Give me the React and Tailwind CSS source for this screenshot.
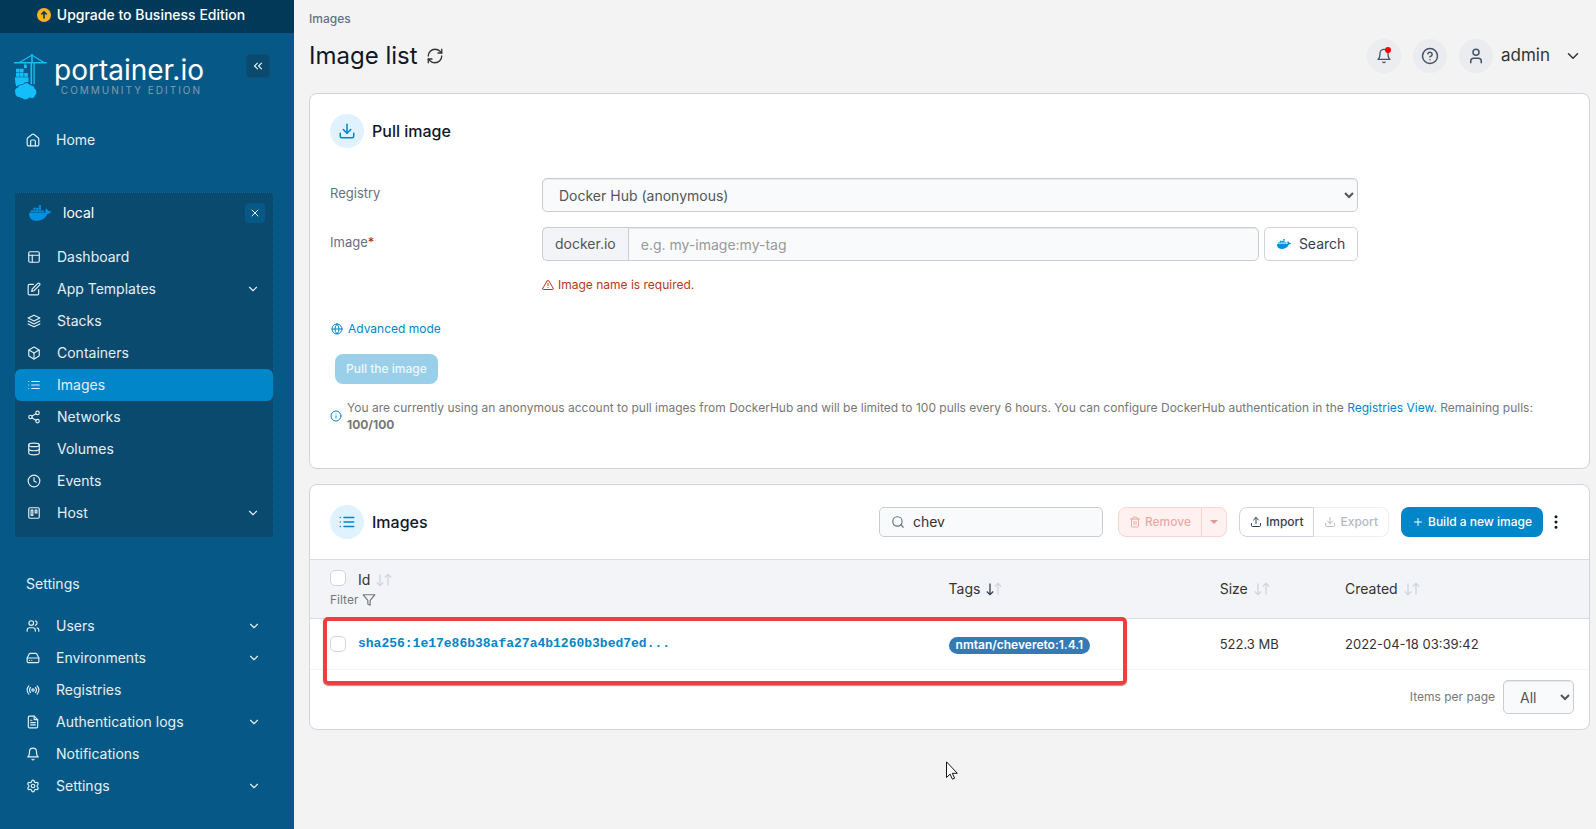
import React, { useState } from "react";
import {
  FiLayout,
  FiEdit,
  FiLayers,
  FiBox,
  FiList,
  FiShare2,
  FiDatabase,
  FiClock,
  FiTrello,
  FiHardDrive,
  FiRadio,
  FiFileText,
  FiBell,
  FiChevronDown,
  FiChevronsLeft,
  FiX,
  FiHelpCircle,
  FiDownload,
  FiUpload,
  FiTrash2,
  FiSearch,
  FiPlus,
  FiMoreVertical,
  FiFilter,
  FiInfo,
  FiGlobe,
  FiAlertTriangle,
} from "react-icons/fi";
import { FaDocker } from "react-icons/fa";
import { RefreshCw, Settings, User, Users } from "lucide-react";

const HomeIcon = ({ className }) => (
  <svg
    viewBox="0 0 24 24"
    fill="none"
    stroke="currentColor"
    strokeWidth="2"
    strokeLinecap="round"
    strokeLinejoin="round"
    className={className}
  >
    <path d="M2 10.600c0-1 .5-2 1.300-2.600l6.800-5.300a3 3 0 0 1 3.800 0L20.700 8c.8.6 1.300 1.600 1.300 2.600V20a2 2 0 0 1-2 2H4a2 2 0 0 1-2-2z" />
    <path d="M8 22v-8a2 2 0 0 1 2-2h4a2 2 0 0 1 2 2v8" />
  </svg>
);

const CraneLogo = () => (
  <svg viewBox="0 0 100 140" className="w-[33px] h-[46px] shrink-0" fill="#13bef9">
    <path d="M52 0h5v26h-5z" />
    <path d="M0 24h99v5H0z" />
    <path d="M54 4 16 26M55 4l36 22" stroke="#13bef9" strokeWidth="3.500" fill="none" />
    <path d="M50 26h5v66h-5zM59 26h4v66h-4z" />
    <path d="M32 28h3v12h-3z" />
    <path d="M30 33h9v10h-9z" />
    <path d="M6 45h11v11H6zM18 45h11v11H18zM6 58h11v11H6zM18 58h11v11H18zM31 58h11v11H31z" />
    <path d="M3 71h41v15c-7-2-13 1-16 6-9-1-16 1-20 8-4-6-5-16-5-29z" />
    <path d="M17 131c-9 0-14-6-13-13-3-7 1-14 8-16 2-7 9-9 15-7 5-8 17-8 21 0 8-1 14 4 14 11 8 4 8 16 1 20 0 7-9 10-16 6-6 8-18 8-22 2-4 0-6-1-8-3z" />
  </svg>
);

const UpgradeIcon = () => (
  <svg viewBox="0 0 14 14" className="w-3.5 h-3.5">
    <circle cx="7" cy="7" r="7" fill="#fdb022" />
    <path
      d="M7 10.500V4M4.300 6.500 7 3.800l2.700 2.700"
      fill="none"
      stroke="#023959"
      strokeWidth="1.600"
    />
  </svg>
);

const SortIcon = ({ active }) => (
  <svg viewBox="0 0 16 14" className="w-4 h-3.5" fill="none" strokeWidth="1.300">
    <path
      d="M4 1.500v11M.8 9.500 4 12.600l3.200-3.100"
      stroke={active ? "#344054" : "#d0d5dd"}
    />
    <path d="M12 12.500v-11M8.800 4.500 12 1.400l3.200 3.100" stroke="#d0d5dd" />
  </svg>
);

const environmentLinks = [
  { name: "Dashboard", icon: FiLayout },
  { name: "App Templates", icon: FiEdit, expandable: true },
  { name: "Stacks", icon: FiLayers },
  { name: "Containers", icon: FiBox },
  { name: "Images", icon: FiList, active: true },
  { name: "Networks", icon: FiShare2 },
  { name: "Volumes", icon: FiDatabase },
  { name: "Events", icon: FiClock },
  { name: "Host", icon: FiTrello, expandable: true },
];

const settingsLinks = [
  { name: "Users", icon: Users, expandable: true },
  { name: "Environments", icon: FiHardDrive, expandable: true },
  { name: "Registries", icon: FiRadio },
  { name: "Authentication logs", icon: FiFileText, expandable: true },
  { name: "Notifications", icon: FiBell },
  { name: "Settings", icon: Settings, expandable: true },
];

const NavItem = ({ item }) => {
  const Icon = item.icon;
  return (
    <li>
      <a
        href="#"
        className={`flex items-center h-8 pl-3 pr-[13px] rounded-md text-sm text-[#e6eef3] ${
          item.active ? "bg-[#0086c9]" : "hover:bg-[#0e6291]"
        }`}
      >
        <Icon className="w-3.5 h-3.5 mr-4 shrink-0" />
        <span className="flex-1">{item.name}</span>
        {item.expandable && <FiChevronDown className="w-3.5 h-3.5" />}
      </a>
    </li>
  );
};

const Sidebar = () => (
  <aside className="w-[294px] shrink-0 bg-[#065986] text-[#e6eef3]">
    <button className="flex items-center justify-center gap-1.5 w-full h-[33px] bg-[#023959] text-white text-sm font-medium pb-1 pr-3">
      <UpgradeIcon />
      Upgrade to Business Edition
    </button>

    <div className="flex items-start pl-3.5 pr-6 pt-[21px]">
      <a href="#" className="flex items-start gap-[7px]">
        <CraneLogo />
        <div className="flex flex-col items-end">
          <span className="text-[28px] leading-8 text-white">portainer.io</span>
          <span className="mr-0.5 text-[10px] leading-2 tracking-[0.2em] text-[#8299ad]">
            COMMUNITY EDITION
          </span>
        </div>
      </a>
      <button
        aria-label="Collapse sidebar"
        className="flex items-center justify-center w-6 h-6 ml-auto rounded-sm bg-[#0b4a6f] border border-[#0a5078]"
      >
        <FiChevronsLeft className="w-3.5 h-3.5" />
      </button>
    </div>

    <nav className="px-3.5 pt-6">
      <ul>
        <NavItem item={{ name: "Home", icon: HomeIcon }} />
      </ul>

      <div className="mt-9 mr-1.5 rounded-sm border border-dotted border-[#0a6a9f] bg-[#0b4a6f] pb-2">
        <div className="flex items-center h-10 pl-3.5 pr-3 mb-2">
          <FaDocker className="w-[22px] h-[22px] mr-3 text-[#0091e2]" />
          <span className="flex-1 text-sm text-white">local</span>
          <button
            aria-label="Close environment"
            className="flex items-center justify-center w-5 h-5 -mr-1 rounded-sm bg-[#065986]"
          >
            <FiX className="w-3 h-3" />
          </button>
        </div>
        <ul>
          {environmentLinks.map((item) => (
            <NavItem key={item.name} item={item} />
          ))}
        </ul>
      </div>

      <h2 className="mt-[34px] mb-3.5 h-6 px-3 text-sm leading-6">Settings</h2>
      <ul className="mr-1.5">
        {settingsLinks.map((item) => (
          <NavItem key={item.name} item={item} />
        ))}
      </ul>
    </nav>
  </aside>
);

const Header = () => (
  <header className="pt-[11px] pb-[19px]">
    <a href="#" className="block text-xs font-medium text-[#667085]">
      Images
    </a>
    <div className="flex items-center h-9 mt-[11px]">
      <h1 className="text-2xl text-[#101828]">Image list</h1>
      <button aria-label="Refresh" className="ml-2 text-[#333333]">
        <RefreshCw className="w-[18px] h-[18px]" strokeWidth={1.75} />
      </button>
      <div className="flex items-center gap-3 ml-auto mr-2 text-[#475467]">
        <button
          aria-label="Notifications"
          className="relative flex items-center justify-center w-[34px] h-[34px] rounded-full bg-[#eaecf0]"
        >
          <FiBell className="w-4 h-4" />
          <span className="absolute top-2 right-2.5 w-1.5 h-1.5 rounded-full bg-[#ff0000]" />
        </button>
        <button
          aria-label="Help"
          className="flex items-center justify-center w-[34px] h-[34px] rounded-full bg-[#eaecf0]"
        >
          <FiHelpCircle className="w-[18px] h-[18px]" />
        </button>
        <button className="flex items-center text-[17px] text-[#333333]">
          <span className="flex items-center justify-center w-[34px] h-[34px] mr-2 rounded-full bg-[#eaecf0]">
            <User className="w-[18px] h-[18px] text-[#475467]" />
          </span>
          admin
          <FiChevronDown className="w-[18px] h-[18px] ml-3.5" />
        </button>
      </div>
    </div>
  </header>
);

const WidgetTitle = ({ icon: Icon, children }) => (
  <div className="flex items-center gap-2">
    <span className="flex items-center justify-center w-[34px] h-[34px] rounded-full bg-[#e0f2fe] text-[#0086c9]">
      <Icon className="w-[18px] h-[18px]" />
    </span>
    <h2 className="text-base font-medium text-[#101828]">{children}</h2>
  </div>
);

const PullImage = () => {
  const [image, setImage] = useState("");

  return (
    <section className="px-5 pt-5 pb-[35px] bg-white border border-[#d0d5dd] rounded-lg">
      <WidgetTitle icon={FiDownload}>Pull image</WidgetTitle>

      <div className="mt-[30px] w-[83%]">
        <div className="flex">
          <label
            htmlFor="registry"
            className="w-[212px] shrink-0 pt-1.5 text-[13px] text-[#667085]"
          >
            Registry
          </label>
          <select
            id="registry"
            className="flex-1 h-[34px] px-3 text-sm text-[#555555] bg-[#f9fafb] border border-[#cccccc] rounded-[5px] shadow-[inset_0_1px_1px_rgba(0,0,0,0.075)]"
          >
            <option>Docker Hub (anonymous)</option>
          </select>
        </div>

        <div className="flex mt-[15px]">
          <label
            htmlFor="image"
            className="w-[212px] shrink-0 pt-1.5 text-[13px] text-[#667085]"
          >
            Image<span className="text-[#b42318]">*</span>
          </label>
          <div className="flex flex-1">
            <span className="flex items-center h-[34px] px-3 text-sm text-[#555555] bg-[#f2f4f7] border border-r-0 border-[#cccccc] rounded-l-[5px]">
              docker.io
            </span>
            <input
              id="image"
              type="text"
              value={image}
              onChange={(e) => setImage(e.target.value)}
              placeholder="e.g. my-image:my-tag"
              className="flex-1 h-[34px] px-3 text-sm text-[#555555] placeholder:text-[#999999] bg-[#f9fafb] border border-[#cccccc] rounded-r-[5px] shadow-[inset_0_1px_1px_rgba(0,0,0,0.075)]"
            />
            <button className="flex items-center gap-2 h-[34px] px-3 ml-[5px] text-sm text-[#344054] bg-white border border-[#d0d5dd] rounded-[5px]">
              <FaDocker className="w-3.5 h-3.5 text-[#0091e2]" />
              Search
            </button>
          </div>
        </div>

        <p className="flex items-center gap-1 mt-4 ml-[212px] text-xs text-[#b93815]">
          <FiAlertTriangle className="w-3 h-3" />
          Image name is required.
        </p>
      </div>

      <a href="#" className="flex items-center gap-1 mt-7 text-xs text-[#0086c9]">
        <FiGlobe className="w-3.5 h-3" />
        Advanced mode
      </a>

      <button
        disabled
        className="block h-[30px] px-[11px] mt-[17px] ml-[5px] text-xs font-medium text-[#eef7fc] bg-[#99cfe9] rounded-lg"
      >
        Pull the image
      </button>

      <div className="flex items-center gap-[5px] mt-[15px] text-xs leading-[17px] text-[#777777]">
        <FiInfo className="w-3 h-3 shrink-0 text-[#0086c9]" />
        <p>
          You are currently using an anonymous account to pull images from
          DockerHub and will be limited to 100 pulls every 6 hours. You can
          configure DockerHub authentication in the{" "}
          <a href="#" className="text-[#0086c9]">
            Registries View
          </a>
          . Remaining pulls: <b className="font-bold">100/100</b>
        </p>
      </div>
    </section>
  );
};

const Checkbox = ({ label }) => (
  <input
    type="checkbox"
    aria-label={label}
    className="appearance-none w-4 h-4 shrink-0 bg-white border border-[#d0d5dd] rounded-[5px] checked:bg-[#0086c9]"
  />
);

const ImagesTable = () => {
  const [search, setSearch] = useState("chev");

  return (
    <section className="mt-[15px] bg-white border border-[#d0d5dd] rounded-lg">
      <div className="flex items-center pl-5 pr-6 py-5">
        <WidgetTitle icon={FiList}>Images</WidgetTitle>

        <label className="flex items-center h-[30px] w-56 ml-auto px-[11px] bg-[#f9fafb] border border-[#cccccc] rounded-[5px]">
          <FiSearch className="w-3.5 h-3.5 mr-2 shrink-0 text-[#667085]" />
          <input
            type="text"
            aria-label="Search images"
            value={search}
            onChange={(e) => setSearch(e.target.value)}
            className="w-full text-sm text-[#333333] outline-none"
          />
        </label>

        <div className="flex ml-[15px] h-[30px] text-xs font-medium text-[#e8aca7]">
          <button
            disabled
            className="flex items-center gap-1 px-2.5 bg-[#fff1f0] border border-[#fbd5d2] rounded-l-lg"
          >
            <FiTrash2 className="w-3 h-3" />
            Remove
          </button>
          <button
            disabled
            aria-label="More remove options"
            className="flex items-center justify-center w-[25px] bg-[#fff1f0] border border-l-0 border-[#fbd5d2] rounded-r-lg"
          >
            <svg viewBox="0 0 8 4" className="w-2 h-1" fill="#e09a94">
              <path d="M0 0h8L4 4z" />
            </svg>
          </button>
        </div>

        <div className="flex ml-3 h-[30px] text-xs font-medium">
          <button className="flex items-center gap-1 px-2.5 text-[#344054] border border-[#d0d5dd] rounded-l-lg">
            <FiUpload className="w-3 h-3" />
            Import
          </button>
          <button
            disabled
            className="flex items-center gap-1 px-2.5 text-[#b5bac3] border border-l-0 border-[#eceef1] rounded-r-lg"
          >
            <FiDownload className="w-3 h-3" />
            Export
          </button>
        </div>

        <button className="flex items-center gap-1 h-[30px] px-[11px] ml-3 text-xs font-medium text-white bg-[#0086c9] rounded-lg">
          <FiPlus className="w-3 h-3" />
          Build a new image
        </button>
        <button aria-label="Table settings" className="ml-1 text-[#101828]">
          <FiMoreVertical className="w-[18px] h-[18px]" />
        </button>
      </div>

      <div className="relative">
        <table className="w-full table-fixed text-left text-sm text-[#333333]">
          <thead>
            <tr className="h-[59px] bg-[#f2f4f7] border-y border-[#d9dde3]">
              <th className="w-[49.3%] pl-5 font-normal">
                <div className="flex items-start gap-3 mb-0.5">
                  <Checkbox label="Select all" />
                  <div className="flex items-center gap-1.5">
                    Id
                    <SortIcon />
                  </div>
                </div>
                <button className="flex items-center gap-1 text-xs text-[#777777]">
                  Filter
                  <FiFilter className="w-3.5 h-3.5" />
                </button>
              </th>
              <th className="w-[21.2%] pl-2 font-normal">
                <div className="flex items-center gap-1.5">
                  Tags
                  <SortIcon active />
                </div>
              </th>
              <th className="w-[9.8%] pl-2 font-normal">
                <div className="flex items-center gap-1.5">
                  Size
                  <SortIcon />
                </div>
              </th>
              <th className="pl-2 font-normal">
                <div className="flex items-center gap-1.5">
                  Created
                  <SortIcon />
                </div>
              </th>
            </tr>
          </thead>
          <tbody>
            <tr className="h-[51px] text-[13px] border-b border-[#f2f4f7]">
              <td className="pl-5">
                <div className="flex items-center gap-3">
                  <Checkbox label="Select image" />
                  <a
                    href="#"
                    className="font-bold text-[#0086c9] font-['Liberation_Mono',monospace]"
                  >
                    sha256:1e17e86b38afa27a4b1260b3bed7ed...
                  </a>
                </div>
              </td>
              <td className="pl-2">
                <span className="inline-block h-[17px] px-[7px] text-xs leading-[15px] font-semibold text-white bg-[#337ab7] rounded-full">
                  nmtan/chevereto:1.4.1
                </span>
              </td>
              <td className="pl-2">522.3 MB</td>
              <td className="pl-2">2022-04-18 03:39:42</td>
            </tr>
          </tbody>
        </table>
        {/* highlight box around the matching row */}
        <div className="absolute top-[58px] left-[13px] w-[62.9%] h-[68px] border-4 border-[#f03e3e] rounded-[5px] shadow-[0_1px_1px_rgba(0,0,0,0.4)] pointer-events-none" />
      </div>

      <div className="flex items-center justify-end gap-2 pt-2.5 pb-[15px] pr-[15px]">
        <label htmlFor="pageSize" className="text-xs text-[#777777]">
          Items per page
        </label>
        <select
          id="pageSize"
          className="w-[71px] h-[34px] px-3 text-sm text-[#555555] bg-[#f9fafb] border border-[#cccccc] rounded-[5px] shadow-[inset_0_1px_1px_rgba(0,0,0,0.075)]"
        >
          <option>All</option>
        </select>
      </div>
    </section>
  );
};

const App = () => {
  return (
    <div className="flex min-h-screen bg-[#f3f3f3] font-['Inter',sans-serif]">
      <Sidebar />
      <main className="flex-1 min-w-0 pl-[15px] pr-1.5">
        <Header />
        <PullImage />
        <ImagesTable />
      </main>
      <svg
        viewBox="0 0 12 19"
        className="absolute left-[946px] top-[761px] w-3 h-[19px] pointer-events-none"
      >
        <path
          d="M.5.8v15.700l3.600-3.400 2.300 5.100 2.200-1-2.300-4.900h5z"
          fill="#ffffff"
          stroke="#14141f"
        />
      </svg>
    </div>
  );
};

export default App;
